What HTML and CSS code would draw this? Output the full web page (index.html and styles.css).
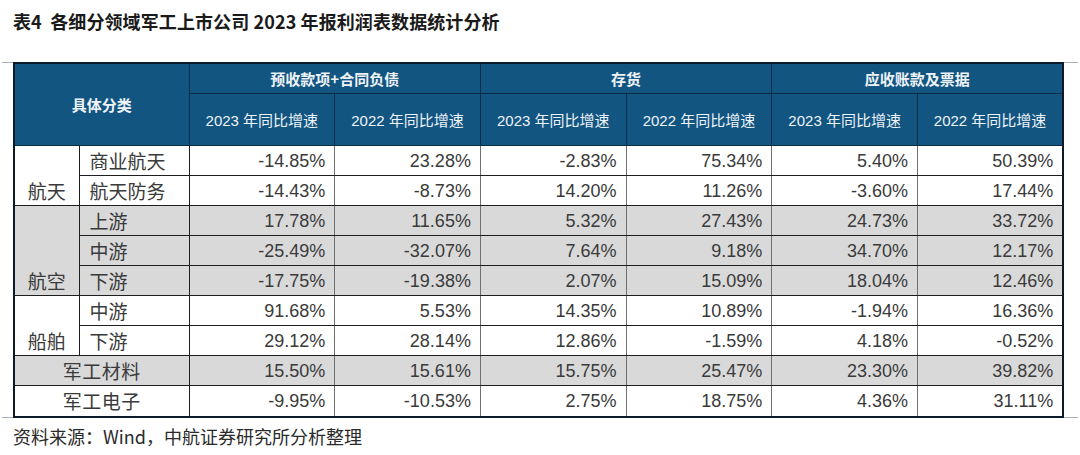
FILE: index.html
```html
<!DOCTYPE html>
<html lang="zh-CN">
<head>
<meta charset="utf-8">
<title>表4</title>
<link rel="stylesheet" href="styles.css">
</head>
<body>
<div class="page">
  <h1 class="title">表4&nbsp; 各细分领域军工上市公司 2023 年报利润表数据统计分析</h1>
  <div class="frame">
    <table class="data">
      <colgroup>
        <col class="c-cat"><col class="c-sub">
        <col class="c-num"><col class="c-num"><col class="c-num"><col class="c-num"><col class="c-num"><col class="c-num">
      </colgroup>
      <thead>
        <tr class="h1">
          <th colspan="2" rowspan="2" class="hcat">具体分类</th>
          <th colspan="2">预收款项+合同负债</th>
          <th colspan="2">存货</th>
          <th colspan="2">应收账款及票据</th>
        </tr>
        <tr class="h2">
          <th>2023 年同比增速</th><th>2022 年同比增速</th>
          <th>2023 年同比增速</th><th>2022 年同比增速</th>
          <th>2023 年同比增速</th><th>2022 年同比增速</th>
        </tr>
      </thead>
      <tbody>
        <tr>
          <td rowspan="2" class="cat">航天</td>
          <td class="sub">商业航天</td>
          <td>-14.85%</td><td>23.28%</td><td>-2.83%</td><td>75.34%</td><td>5.40%</td><td>50.39%</td>
        </tr>
        <tr>
          <td class="sub">航天防务</td>
          <td>-14.43%</td><td>-8.73%</td><td>14.20%</td><td>11.26%</td><td>-3.60%</td><td>17.44%</td>
        </tr>
        <tr class="gray">
          <td rowspan="3" class="cat">航空</td>
          <td class="sub">上游</td>
          <td>17.78%</td><td>11.65%</td><td>5.32%</td><td>27.43%</td><td>24.73%</td><td>33.72%</td>
        </tr>
        <tr class="gray">
          <td class="sub">中游</td>
          <td>-25.49%</td><td>-32.07%</td><td>7.64%</td><td>9.18%</td><td>34.70%</td><td>12.17%</td>
        </tr>
        <tr class="gray">
          <td class="sub">下游</td>
          <td>-17.75%</td><td>-19.38%</td><td>2.07%</td><td>15.09%</td><td>18.04%</td><td>12.46%</td>
        </tr>
        <tr>
          <td rowspan="2" class="cat">船舶</td>
          <td class="sub">中游</td>
          <td>91.68%</td><td>5.53%</td><td>14.35%</td><td>10.89%</td><td>-1.94%</td><td>16.36%</td>
        </tr>
        <tr>
          <td class="sub">下游</td>
          <td>29.12%</td><td>28.14%</td><td>12.86%</td><td>-1.59%</td><td>4.18%</td><td>-0.52%</td>
        </tr>
        <tr class="gray">
          <td colspan="2" class="merged">军工材料</td>
          <td>15.50%</td><td>15.61%</td><td>15.75%</td><td>25.47%</td><td>23.30%</td><td>39.82%</td>
        </tr>
        <tr class="last">
          <td colspan="2" class="merged">军工电子</td>
          <td>-9.95%</td><td>-10.53%</td><td>2.75%</td><td>18.75%</td><td>4.36%</td><td>31.11%</td>
        </tr>
      </tbody>
    </table>
  </div>
  <p class="source">资料来源：Wind，中航证券研究所分析整理</p>
</div>
</body>
</html>
```

FILE: styles.css
```css
html, body {
  margin: 0;
  padding: 0;
  background: #ffffff;
}

.page {
  width: 1080px;
  height: 455px;
  overflow: hidden;
  font-family: "Noto Sans CJK SC", "Liberation Sans", sans-serif;
  color: #333333;
}

.title {
  margin: 0;
  padding: 8px 0 0 13px;
  height: 54px;
  box-sizing: border-box;
  font-size: 18px;
  line-height: 26px;
  font-weight: 700;
  color: #1a1a1a;
  font-family: "Noto Sans CJK SC", "Liberation Serif", serif;
  letter-spacing: 0.1px;
}

.frame {
  margin: 8px 2px 0 2px;
  width: 1076px;
  border-top: 1px solid #a9aeb5;
  border-bottom: 1px solid #a9aeb5;
  padding-left: 11px;
  box-sizing: border-box;
}

.data {
  border-collapse: collapse;
  table-layout: fixed;
  width: 1049px;
  margin-top: -1px;
  margin-bottom: -1px;
  border: 2px solid #0d1a2a;
}

.c-cat { width: 65px; }
.c-sub { width: 110px; }
.c-num { width: 145.7px; }

.data th {
  background: #125581;
  color: #eef3f8;
  font-weight: 400;
  border: 1px solid #0b2c45;
  padding: 0;
  text-align: center;
}

.data tr.h1 th {
  height: 29px;
  font-size: 15px;
  font-weight: 600;
  font-family: "Noto Sans CJK SC", serif;
}

.data th.hcat {
  font-size: 15px;
  font-weight: 600;
  vertical-align: middle;
  padding-bottom: 0;
}

.data tr.h2 th {
  height: 51px;
  font-size: 15px;
  font-family: "Liberation Sans", "Noto Sans CJK SC", sans-serif;
}

.data td {
  height: 29px;
  padding: 0 9px 0 0;
  border-top: 1px solid #1e1e1e;
  border-bottom: 1px solid #1e1e1e;
  border-left: 1px solid #707070;
  border-right: 1px solid #707070;
  text-align: right;
  font-family: "Liberation Sans", sans-serif;
  font-size: 18px;
  color: #3a3a3a;
  line-height: 22px;
  background: #ffffff;
}

.data tr.gray td {
  background: #d9d9d9;
}

.data td.cat {
  text-align: center;
  vertical-align: bottom;
  padding: 0 0 3px 0;
  font-family: "Noto Sans CJK SC", sans-serif;
  font-size: 19px;
  border-right: 1px solid #1e1e1e;
  border-left: 2px solid #0d1a2a;
}

.data td.sub {
  text-align: left;
  padding: 0 0 0 10px;
  font-family: "Noto Sans CJK SC", sans-serif;
  font-size: 19px;
  border-right: 1px solid #1e1e1e;
}

.data td.merged {
  text-align: center;
  padding: 0;
  font-family: "Noto Sans CJK SC", sans-serif;
  font-size: 19px;
  letter-spacing: 0.5px;
  border-right: 1px solid #1e1e1e;
}

.data tr.last td {
  height: 30px;
}

.source {
  margin: 6px 0 0 13px;
  font-family: "Noto Sans CJK SC", "Liberation Serif", serif;
  font-size: 18px;
  line-height: 24px;
  color: #2a2a2a;
}
```
